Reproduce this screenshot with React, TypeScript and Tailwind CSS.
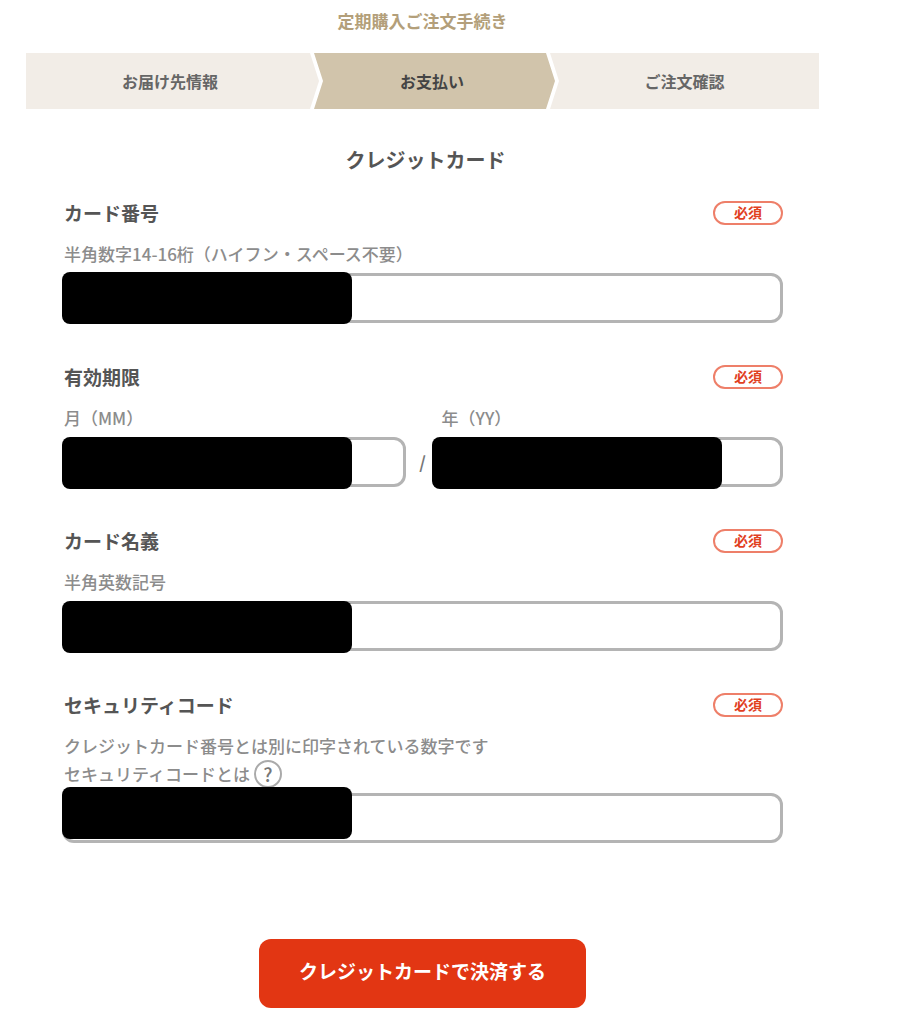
import type { ReactNode } from "react";

const inputClass =
  "block h-[50px] w-full rounded-xl border-3 border-[#b4b4b4] bg-white px-4 text-[17px] text-[#555] outline-none focus:border-[#888]";

const maskClass = "pointer-events-none absolute h-[52px] w-[290px] rounded-lg bg-black";

function Required() {
  return (
    <span className="flex h-6 w-[70px] items-center justify-center rounded-full border-2 border-[#ee7f69] pb-0.5 text-[14px] font-bold text-[#e1401f]">
      必須
    </span>
  );
}

function Heading({ children }: { children: ReactNode }) {
  return (
    <div className="mb-[15px] flex h-6 items-center justify-between">
      <span className="pl-0.5 text-[19px] font-bold text-[#555]">{children}</span>
      <Required />
    </div>
  );
}

const hintClass = "mb-[5px] block pl-0.5 text-[17px] leading-7 font-medium text-[#8c8c8c]";

export default function App() {
  return (
    <main className="bg-white pt-[7px] pr-[105px] pb-4 pl-[26px] font-['Noto_Sans_CJK_JP',sans-serif]">
      <h1 className="text-center text-[17px] leading-7 font-bold text-[#b39f7a]">定期購入ご注文手続き</h1>

      <ol className="mt-[18px] flex h-14 text-[16px] font-bold text-[#666]">
        <li className="-mr-[5px] flex flex-[288] items-center justify-center bg-[#f2ede7] pr-[5px] [clip-path:polygon(0_0,calc(100%_-_9px)_0,100%_50%,calc(100%_-_9px)_100%,0_100%)]">
          お届け先情報
        </li>
        <li
          aria-current="step"
          className="-mr-[5px] flex flex-[236] items-center justify-center bg-[#d1c4ab] pr-[5px] text-[#444] [clip-path:polygon(0_0,calc(100%_-_9px)_0,100%_50%,calc(100%_-_9px)_100%,0_100%,9px_50%)]"
        >
          お支払い
        </li>
        <li className="flex flex-[269] items-center justify-center bg-[#f2ede7] [clip-path:polygon(0_0,100%_0,100%_100%,0_100%,9px_50%)]">
          ご注文確認
        </li>
      </ol>

      <h2 className="mt-[37px] pl-1.5 text-center text-[20px] leading-7 font-bold text-[#555]">クレジットカード</h2>

      <form className="mt-[27px] px-9" onSubmit={(e) => e.preventDefault()}>
        <div className="flex flex-col gap-[42px]">
          <section>
            <Heading>カード番号</Heading>
            <label htmlFor="number" className={hintClass}>
              半角数字14-16桁（ハイフン・スペース不要）
            </label>
            <div className="relative">
              <input id="number" className={inputClass} inputMode="numeric" />
              <span aria-hidden="true" className={`${maskClass} -top-px left-0`} />
            </div>
          </section>

          <section>
            <Heading>有効期限</Heading>
            <div className="grid grid-cols-[1fr_34px_1fr] items-end">
              <div>
                <label htmlFor="month" className={hintClass}>
                  月（MM）
                </label>
                <div className="relative">
                  <input id="month" className={inputClass} inputMode="numeric" />
                  <span aria-hidden="true" className={`${maskClass} top-0 left-0`} />
                </div>
              </div>
              <span className="flex h-[50px] items-center justify-center text-[17px] font-bold text-[#777]">/</span>
              <div>
                <label htmlFor="year" className={hintClass}>
                  年（YY）
                </label>
                <div className="relative">
                  <input id="year" className={inputClass} inputMode="numeric" />
                  <span aria-hidden="true" className={`${maskClass} top-0 -left-2`} />
                </div>
              </div>
            </div>
          </section>

          <section>
            <Heading>カード名義</Heading>
            <label htmlFor="holder" className={hintClass}>
              半角英数記号
            </label>
            <div className="relative">
              <input id="holder" className={inputClass} />
              <span aria-hidden="true" className={`${maskClass} top-0 left-0`} />
            </div>
          </section>

          <section>
            <Heading>セキュリティコード</Heading>
            <div className="mb-[5px] pl-0.5 text-[17px] leading-7 font-medium text-[#8c8c8c]">
              <label htmlFor="code" className="block">
                クレジットカード番号とは別に印字されている数字です
              </label>
              <div className="flex items-center gap-1">
                セキュリティコードとは
                <button
                  type="button"
                  aria-label="セキュリティコードとは"
                  className="flex size-7 items-center justify-center rounded-full border-2 border-[#aaa] pb-0.5 text-[19px] leading-none font-medium text-[#777]"
                >
                  ?
                </button>
              </div>
            </div>
            <div className="relative">
              <input id="code" className={inputClass} inputMode="numeric" />
              <span aria-hidden="true" className={`${maskClass} -top-1.5 left-0`} />
            </div>
          </section>
        </div>

        <button
          type="submit"
          className="mx-auto mt-24 flex h-[69px] w-[327px] items-center justify-center rounded-xl bg-[#e23613] pb-1 text-[19px] font-bold text-white"
        >
          クレジットカードで決済する
        </button>
      </form>
    </main>
  );
}
